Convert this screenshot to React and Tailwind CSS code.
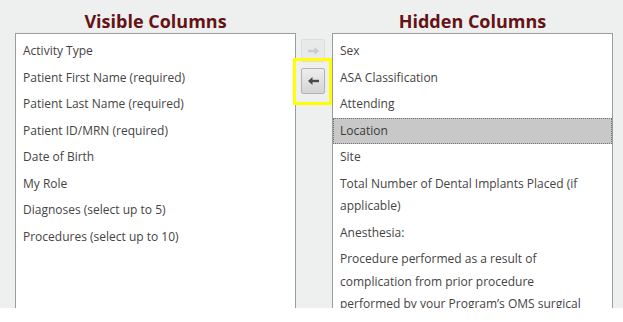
const visibleColumns = [
  'Activity Type',
  'Patient First Name (required)',
  'Patient Last Name (required)',
  'Patient ID/MRN (required)',
  'Date of Birth',
  'My Role',
  'Diagnoses (select up to 5)',
  'Procedures (select up to 10)',
];

const hiddenColumns = [
  'Sex',
  'ASA Classification',
  'Attending',
  'Location',
  'Site',
  'Total Number of Dental Implants Placed (if applicable)',
  'Anesthesia:',
  "Procedure performed as a result of complication from prior procedure performed by your Program\u2019s OMS surgical team",
];

function Arrow({ dir, color }) {
  return (
    <svg width="11" height="8" viewBox="0 0 11 8">
      {dir === 'left' ? (
        <>
          <path d="M0 4 L4.5 0 L4.5 8 Z" fill={color} />
          <rect x="4" y="2.8" width="7" height="2.4" fill={color} />
        </>
      ) : (
        <>
          <path d="M11 4 L6.5 0 L6.5 8 Z" fill={color} />
          <rect x="0" y="2.8" width="7" height="2.4" fill={color} />
        </>
      )}
    </svg>
  );
}

function ColumnList({ title, items, selected }) {
  return (
    <div className="flex w-[281px] shrink-0 flex-col">
      <div className="flex h-[33px] shrink-0 items-end justify-center pb-[1px]">
        <h2 className="text-[18px] font-bold leading-[22px] text-[#661214]">{title}</h2>
      </div>
      <div className="h-[300px] shrink-0 border border-[#9c9c9c] bg-white pt-[4px]">
        {items.map((item) => (
          <div
            key={item}
            className={
              item === selected
                ? 'border border-dotted border-[#6f6f6f] bg-[#c8c8c8] py-[1px] pl-[6px] pr-[15px] text-[12px] leading-[22.5px] text-[#3a3a3a]'
                : 'py-[2px] pl-[7px] pr-[16px] text-[12px] leading-[22.5px] text-[#444]'
            }
          >
            {item}
          </div>
        ))}
      </div>
    </div>
  );
}

export default function App() {
  return (
    <div className="h-[322px] w-[623px] bg-white" style={{ fontFamily: '"Open Sans", "Noto Sans", sans-serif' }}>
      <div className="flex h-[308px] items-start overflow-hidden bg-[#eef0f0] pl-[15px] pr-[11px]">
        <ColumnList title="Visible Columns" items={visibleColumns} />

        {/* Move buttons */}
        <div className="relative w-[36px] shrink-0 pl-[5px] pt-[39px]">
          <div className="flex h-[23px] w-[24px] items-center justify-center rounded-[2px] border border-[#dcdede] bg-[#e8eaea]">
            <Arrow dir="right" color="#c9cbcb" />
          </div>
          <div className="mt-[6px] flex h-[26px] w-[24px] items-center justify-center rounded-[2px] border border-[#b3b3b3] bg-gradient-to-b from-[#eeeeee] to-[#d4d4d4]">
            <Arrow dir="left" color="#4a4a4a" />
          </div>
          <div className="absolute left-[-3px] top-[58px] h-[47px] w-[39px] border-[3px] border-[#ffff00]" />
        </div>

        <ColumnList title="Hidden Columns" items={hiddenColumns} selected="Location" />
      </div>
    </div>
  );
}
